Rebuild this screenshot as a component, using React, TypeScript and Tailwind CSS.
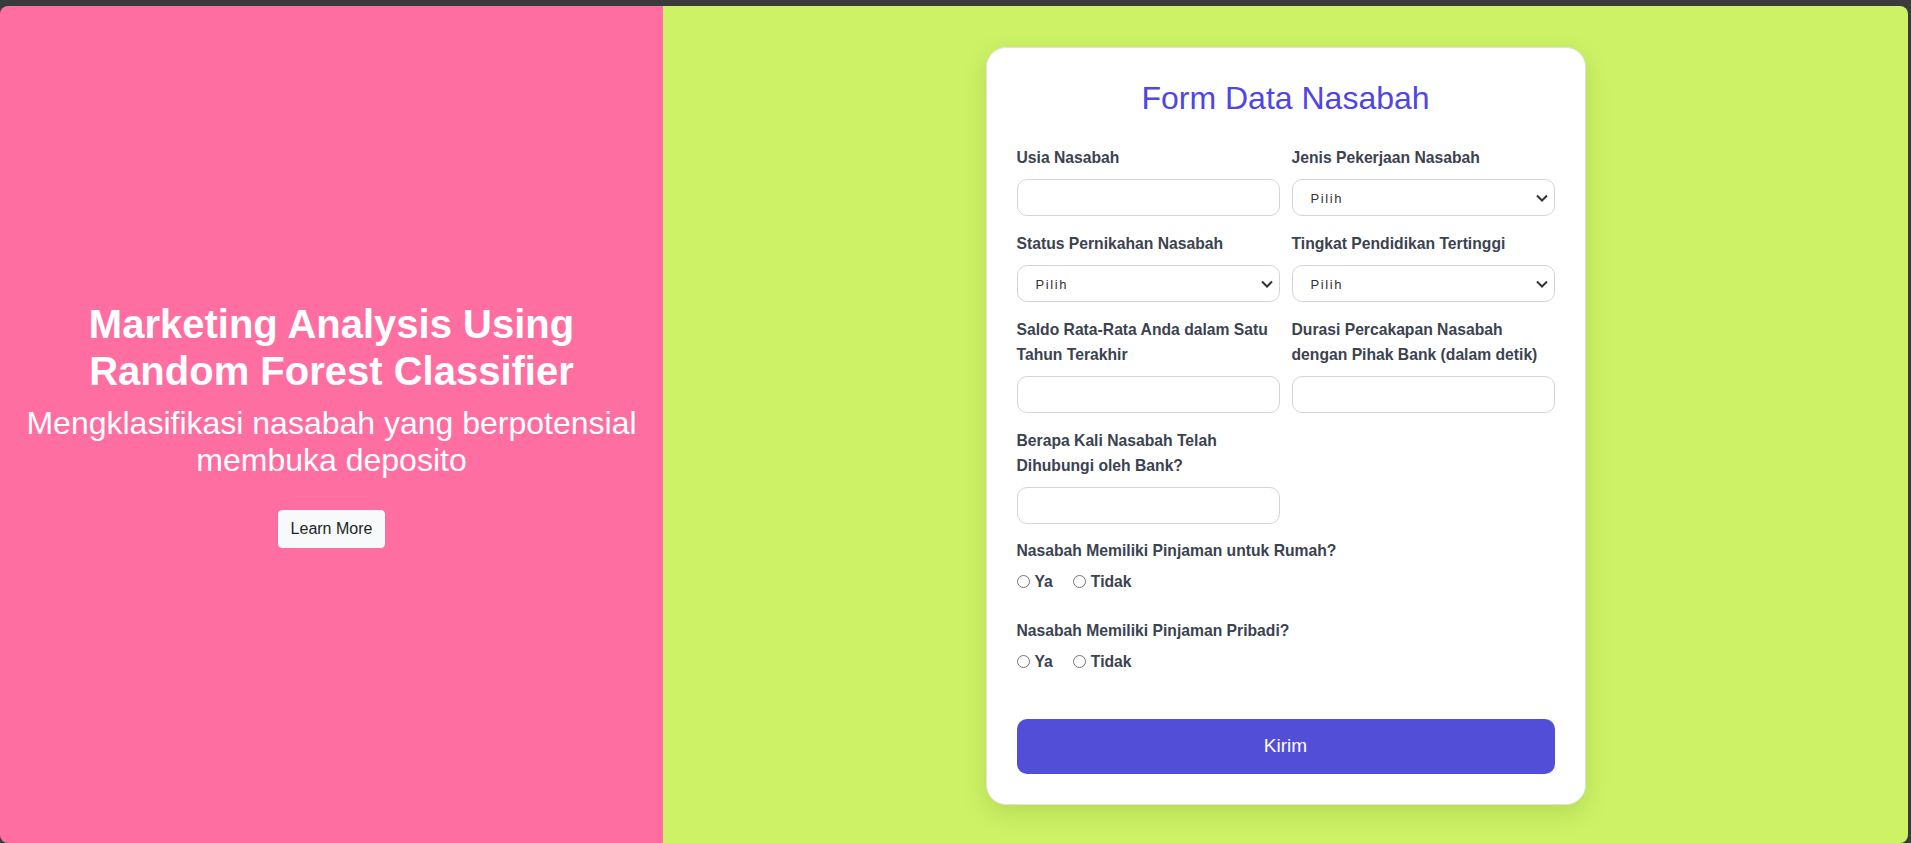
import { useState } from 'react'

const labelCls = 'mb-[9px] block text-[15.7px] font-bold leading-[25px] text-[#3b4350]'
const inputCls =
  'block h-[37px] w-full rounded-[10px] border border-[#d1d5db] bg-white px-3 text-sm text-[#374151] outline-none'

function TextField({ label }: { label: React.ReactNode }) {
  return (
    <div>
      <label className={labelCls}>{label}</label>
      <input type="text" className={inputCls} />
    </div>
  )
}

function SelectField({ label }: { label: string }) {
  return (
    <div>
      <label className={labelCls}>{label}</label>
      <div className="relative">
        <select className="block h-[37px] w-full appearance-none rounded-[10px] border border-[#d1d5db] bg-white pl-[18px] pt-[3px] text-[13px] tracking-[1.6px] text-[#333333] outline-none">
          <option>Pilih</option>
        </select>
        {/* chevron over the select */}
        <svg
          className="pointer-events-none absolute right-[7px] top-[15px]"
          width="12"
          height="8"
          viewBox="0 0 12 8"
          fill="none"
        >
          <polyline points="1,1.5 6,6.5 11,1.5" stroke="#333" strokeWidth="2" />
        </svg>
      </div>
    </div>
  )
}

function RadioGroup({ name, label }: { name: string; label: string }) {
  const [value, setValue] = useState('')
  return (
    <div>
      <p className="mb-[6px] text-[15.7px] font-bold leading-[25px] text-[#3b4350]">{label}</p>
      <div className="flex h-[25px] items-center text-[15.7px] font-bold text-[#3b4350]">
        <label className="mr-[20px] flex items-center">
          <input
            type="radio"
            name={name}
            checked={value === 'ya'}
            onChange={() => setValue('ya')}
            className="mr-[5px] h-[13px] w-[13px]"
          />
          Ya
        </label>
        <label className="flex items-center">
          <input
            type="radio"
            name={name}
            checked={value === 'tidak'}
            onChange={() => setValue('tidak')}
            className="mr-[5px] h-[13px] w-[13px]"
          />
          Tidak
        </label>
      </div>
    </div>
  )
}

export default function App() {
  return (
    <div className="h-screen bg-[#3a3a3a] pr-[3px] pt-[6px] font-['Liberation_Sans',Arial,sans-serif]">
      <div className="flex h-full overflow-hidden rounded-[8px]">
        <section className="flex w-[663px] shrink-0 flex-col items-center justify-center bg-[#ff6ea0] text-center text-white">
          <h1 className="text-[40px] font-bold leading-[47px]">
            Marketing Analysis Using
            <br />
            Random Forest Classifier
          </h1>
          <p className="mt-[10px] text-[32px] leading-[37px]">
            Mengklasifikasi nasabah yang berpotensial
            <br />
            membuka deposito
          </p>
          <button className="mt-[31px] rounded-[4px] border border-[#f8f9fa] bg-[#f8f9fa] px-3 py-1.5 text-base leading-6 text-[#212529]">
            Learn More
          </button>
        </section>

        <section className="flex flex-1 justify-center bg-[#cdf266] pt-[41px]">
          <div className="h-fit w-[600px] rounded-[20px] border border-[#dfe3dc] bg-white px-[30px] pb-[30px] pt-8 shadow-[0_8px_24px_rgba(80,110,0,0.18)]">
            <h2 className="mb-[29px] text-center text-[32px] leading-[36px] text-[#4f46e5]">Form Data Nasabah</h2>

            <div className="grid grid-cols-2 gap-x-3 gap-y-[15px]">
              <TextField label="Usia Nasabah" />
              <SelectField label="Jenis Pekerjaan Nasabah" />
              <SelectField label="Status Pernikahan Nasabah" />
              <SelectField label="Tingkat Pendidikan Tertinggi" />
              <TextField label="Saldo Rata-Rata Anda dalam Satu Tahun Terakhir" />
              <TextField label="Durasi Percakapan Nasabah dengan Pihak Bank (dalam detik)" />
              <TextField label="Berapa Kali Nasabah Telah Dihubungi oleh Bank?" />
            </div>

            <div className="mt-[14px]">
              <RadioGroup name="housing" label="Nasabah Memiliki Pinjaman untuk Rumah?" />
            </div>
            <div className="mt-6">
              <RadioGroup name="loan" label="Nasabah Memiliki Pinjaman Pribadi?" />
            </div>

            <button className="mt-[45px] h-[55px] w-full rounded-[10px] bg-[#534ed7] text-[19px] text-white">Kirim</button>
          </div>
        </section>
      </div>
    </div>
  )
}
